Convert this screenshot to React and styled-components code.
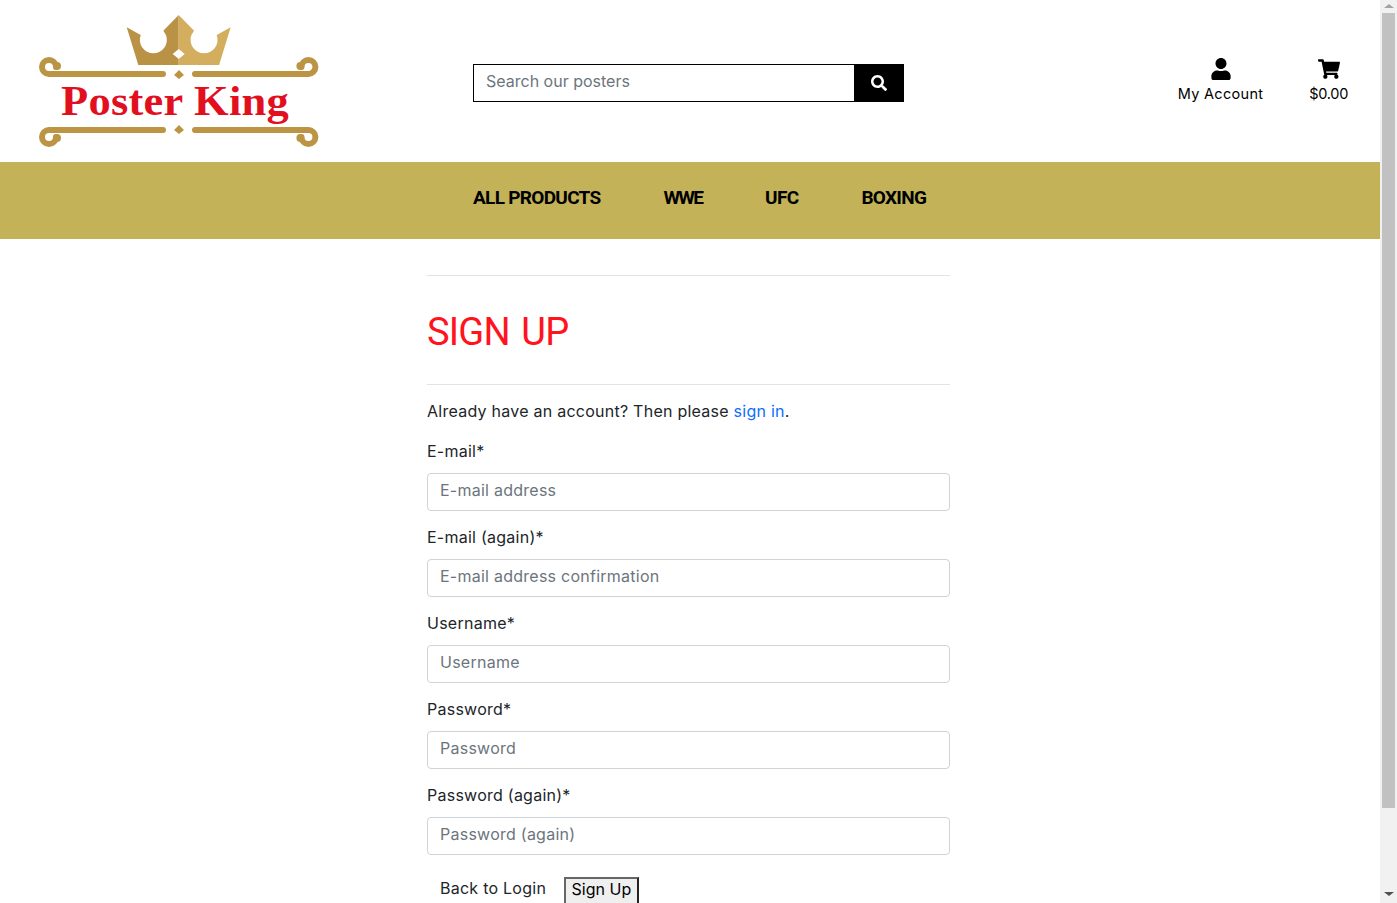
import styled, { createGlobalStyle } from 'styled-components';
import { FaSearch, FaUser, FaShoppingCart } from 'react-icons/fa';

const GlobalStyle = createGlobalStyle`
  body {
    margin: 0;
    font-family: Inter, 'Liberation Sans', sans-serif;
    font-size: 16px;
    letter-spacing: 0.25px;
    color: #212529;
    background: #fff;
  }
  * {
    box-sizing: border-box;
  }
`;

const Page = styled.div`
  padding-right: 17px;
`;

const Scrollbar = styled.div`
  position: fixed;
  top: 0;
  right: 0;
  bottom: 0;
  width: 17px;
  background: #f1f1f1;
  display: flex;
  flex-direction: column;
  align-items: center;
`;

const ScrollArrow = styled.div`
  width: 0;
  height: 0;
  margin-top: ${(props) => (props.$down ? 'auto' : '4px')};
  margin-bottom: ${(props) => (props.$down ? '7px' : '0')};
  border-left: 5px solid transparent;
  border-right: 5px solid transparent;
  border-top: ${(props) => (props.$down ? '4px solid #505050' : '0')};
  border-bottom: ${(props) => (props.$down ? '0' : '4px solid #a3a3a3')};
`;

const ScrollThumb = styled.div`
  width: 13px;
  height: 795px;
  margin-top: 5px;
  background: #c1c1c1;
`;

const Header = styled.header`
  height: 162px;
  display: flex;
  align-items: center;
  padding: 0 32px;
`;

const LogoWrap = styled.a`
  display: block;
  width: 292px;
  height: 162px;
`;

const SearchForm = styled.form`
  display: flex;
  width: 431px;
  height: 38px;
  margin: 3px 0 0 149px;
`;

const SearchInput = styled.input`
  flex: 1;
  min-width: 0;
  border: 1px solid #000;
  border-right: 0;
  padding: 0 12px 3px;
  font: inherit;
  outline: none;
  &::placeholder {
    color: #6c757d;
  }
`;

const SearchButton = styled.button`
  width: 50px;
  border: 0;
  background: #000;
  color: #fff;
  display: flex;
  align-items: center;
  justify-content: center;
  font-size: 16px;
`;

const HeaderLinks = styled.div`
  margin-left: auto;
  display: flex;
  gap: 46px;
`;

const HeaderLink = styled.a`
  display: flex;
  flex-direction: column;
  align-items: center;
  color: #000;
  font-size: 14.5px;
  line-height: 21px;
  letter-spacing: ${(props) => (props.$compact ? '-0.3px' : '0.3px')};
  svg {
    font-size: 22px;
    margin-bottom: 3px;
  }
`;

const Nav = styled.nav`
  height: 77px;
  background: #c3b257;
  display: flex;
  gap: 63px;
  padding: 22px 0 0 473px;
`;

const NavLink = styled.a`
  font-family: Roboto, 'Liberation Sans', sans-serif;
  font-weight: 700;
  font-size: 19px;
  line-height: 28px;
  letter-spacing: ${(props) => (props.$tight ? '-1.8px' : '-0.7px')};
  color: #000;
  text-transform: uppercase;
`;

const Main = styled.main`
  width: 523px;
  margin: 36px 0 0 427px;
  padding-bottom: 85px;
`;

const Rule = styled.hr`
  border: 0;
  border-top: 1px solid #e3e3e3;
  margin: 0;
`;

const Title = styled.h1`
  margin: 0;
  padding: 32px 0 28px;
  font-family: Roboto, 'Liberation Sans', sans-serif;
  font-weight: 400;
  font-size: 38px;
  line-height: 48px;
  letter-spacing: -0.8px;
  word-spacing: 3px;
  color: #ff141e;
`;

const Intro = styled.p`
  margin: 15px 0 17px;
  line-height: 22px;
`;

const SignInLink = styled.a`
  color: #0d6efd;
`;

const Field = styled.div`
  margin-bottom: 14px;
`;

const Label = styled.label`
  display: block;
  line-height: 24px;
  margin-bottom: 10px;
`;

const Input = styled.input`
  display: block;
  width: 100%;
  height: 38px;
  padding: 0 12px 5px;
  border: 1px solid #ced4da;
  border-radius: 4px;
  font: inherit;
  letter-spacing: 0.25px;
  color: #212529;
  &::placeholder {
    color: #6c757d;
  }
`;

const Actions = styled.div`
  display: flex;
  align-items: flex-start;
  gap: 18px;
  padding-left: 13px;
  margin-top: 21px;
`;

const BackLink = styled.a`
  line-height: 24px;
  color: #212529;
`;

const SubmitButton = styled.button`
  height: 30px;
  margin-top: 1px;
  padding: 0 5.5px 6px;
  font: inherit;
  color: #000;
  background: #efefef;
  border: 2px solid;
  border-color: #666 #222 #222 #666;
`;

const Logo = () => (
  <svg width="292" height="162" viewBox="32 0 292 162" aria-label="Poster King">
    <path d="M178.7 15 L163.3 30.7 L166 35 A13.5 13.5 0 1 1 140.7 35 L126.7 27.3 L138.3 65 H178.7 V59 L172.7 54 L178.7 49 Z" fill="#b99245" />
    <path d="M178.7 15 L194.1 30.7 L191.4 35 A13.5 13.5 0 1 0 216.7 35 L230.7 27.3 L219.1 65 H178.7 V59 L184.7 54 L178.7 49 Z" fill="#d4ae5f" />
    <g fill="none" stroke="#bc9544" strokeWidth="6" strokeLinecap="round">
      <path d="M163 74 H49 A7 7 0 1 1 56 67" />
      <path d="M195 74 H308.4 A7 7 0 1 0 301.4 67" />
      <path d="M163 130 H49 A7 7 0 1 0 56 137" />
      <path d="M195 130 H308.4 A7 7 0 1 1 301.4 137" />
    </g>
    <g fill="#bc9544">
      <circle cx="57" cy="66" r="4" />
      <circle cx="300.4" cy="66" r="4" />
      <circle cx="57" cy="138" r="4" />
      <circle cx="300.4" cy="138" r="4" />
      <path d="M179 70 L184 75 L179 79 L174 75 Z M179 125 L184 130 L179 134 L174 130 Z" />
    </g>
    <text
      x="61"
      y="115"
      textLength="228"
      lengthAdjust="spacingAndGlyphs"
      fontFamily="'Liberation Serif', serif"
      fontWeight="700"
      fontSize="42"
      fill="#e2101f"
    >
      Poster King
    </text>
  </svg>
);

const fields = [
  { label: 'E-mail', placeholder: 'E-mail address', type: 'email' },
  { label: 'E-mail (again)', placeholder: 'E-mail address confirmation', type: 'email' },
  { label: 'Username', placeholder: 'Username', type: 'text' },
  { label: 'Password', placeholder: 'Password', type: 'password' },
  { label: 'Password (again)', placeholder: 'Password (again)', type: 'password' },
];

const App = () => (
  <Page>
    <GlobalStyle />
    <Header>
      <LogoWrap>
        <Logo />
      </LogoWrap>
      <SearchForm>
        <SearchInput placeholder="Search our posters" />
        <SearchButton type="button">
          <FaSearch />
        </SearchButton>
      </SearchForm>
      <HeaderLinks>
        <HeaderLink>
          <FaUser />
          My Account
        </HeaderLink>
        <HeaderLink $compact>
          <FaShoppingCart />
          $0.00
        </HeaderLink>
      </HeaderLinks>
    </Header>
    <Nav>
      <NavLink>All Products</NavLink>
      <NavLink $tight>WWE</NavLink>
      <NavLink>UFC</NavLink>
      <NavLink>Boxing</NavLink>
    </Nav>
    <Main>
      <Rule />
      <Title>SIGN UP</Title>
      <Rule />
      <Intro>
        Already have an account? Then please <SignInLink>sign in</SignInLink>.
      </Intro>
      {fields.map((field) => (
        <Field key={field.label}>
          <Label>{field.label}*</Label>
          <Input type={field.type} placeholder={field.placeholder} />
        </Field>
      ))}
      <Actions>
        <BackLink>Back to Login</BackLink>
        <SubmitButton type="button">Sign Up</SubmitButton>
      </Actions>
    </Main>
    <Scrollbar>
      <ScrollArrow />
      <ScrollThumb />
      <ScrollArrow $down />
    </Scrollbar>
  </Page>
);

export default App;
